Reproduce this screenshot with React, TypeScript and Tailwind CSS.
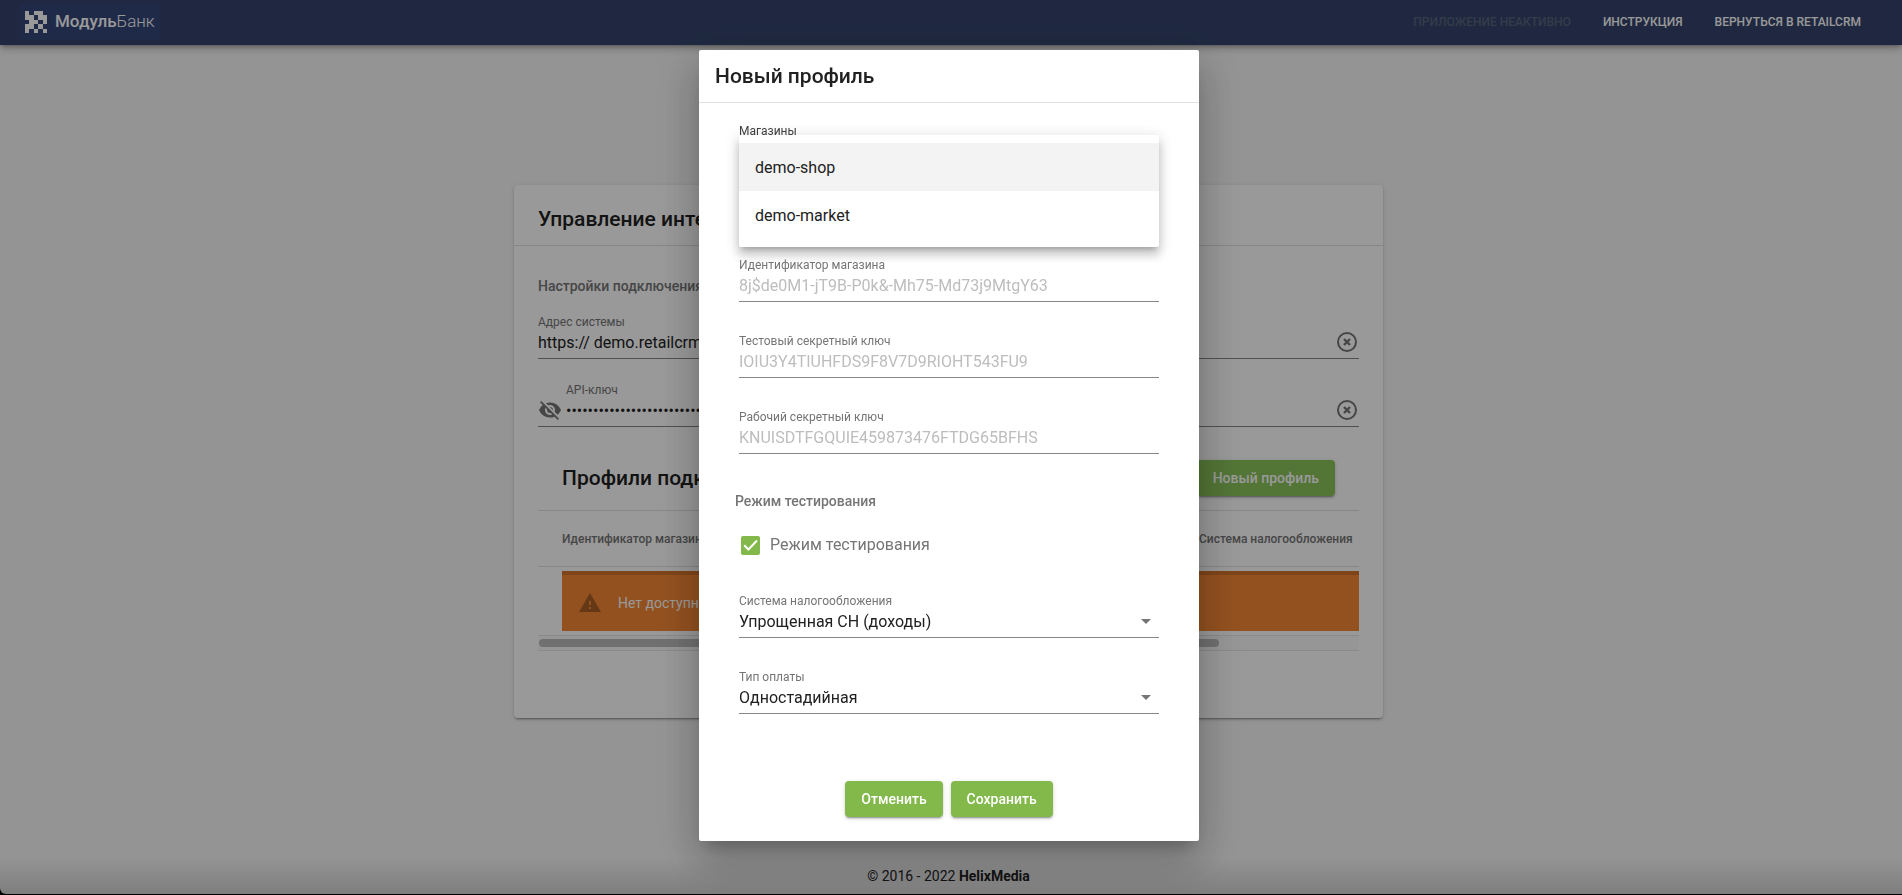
import { useState } from "react";
import type { ReactNode } from "react";
import { MdVisibilityOff } from "react-icons/md";

const SHOPS = ["demo-shop", "demo-market"];

const KEYS = [
  {
    id: "shop-id",
    label: "Идентификатор магазина",
    value: "8j$de0M1-jT9B-P0k&-Mh75-Md73j9MtgY63",
  },
  {
    id: "test-key",
    label: "Тестовый секретный ключ",
    value: "IOIU3Y4TIUHFDS9F8V7D9RIOHT543FU9",
  },
  {
    id: "prod-key",
    label: "Рабочий секретный ключ",
    value: "KNUISDTFGQUIE459873476FTDG65BFHS",
  },
];

// Filled cells of the 5x5 logo mark
const LOGO_ROWS = ["10110", "11011", "01101", "11010", "10101"];

function Logo() {
  return (
    <a href="#" className="flex h-9 w-[140px] items-center bg-[#35467a] pl-[5px] text-white">
      <svg viewBox="0 0 5 5" className="size-[22px]" shapeRendering="crispEdges" fill="currentColor">
        {LOGO_ROWS.map((row, y) =>
          row
            .split("")
            .map((cell, x) =>
              cell === "1" ? <rect key={`${x}-${y}`} x={x} y={y} width="1" height="1" /> : null
            )
        )}
      </svg>
      <span className="ml-2 text-[17px]">
        <span className="font-medium">Модуль</span>
        <span className="font-light">Банк</span>
      </span>
    </a>
  );
}

function ClearButton({ label }: { label: string }) {
  return (
    <button type="button" aria-label={label} className="flex size-6 items-center justify-center">
      <svg viewBox="0 0 24 24" className="size-6" fill="none" stroke="#757575" strokeWidth="2">
        <circle cx="12" cy="12" r="9" />
        <path d="M9 9l6 6M15 9l-6 6" strokeWidth="2.4" />
      </svg>
    </button>
  );
}

interface FieldProps {
  id: string;
  label: string;
  children: ReactNode;
}

function Field({ id, label, children }: FieldProps) {
  return (
    <div className="border-b border-[#868686]">
      <label htmlFor={id} className="block h-4 text-xs leading-4 text-[#757575]">
        {label}
      </label>
      {children}
    </div>
  );
}

interface SelectFieldProps {
  id: string;
  label: string;
  options: string[];
}

function SelectField({ id, label, options }: SelectFieldProps) {
  return (
    <Field id={id} label={label}>
      <div className="relative">
        <select
          id={id}
          className="block h-7 w-full appearance-none bg-transparent pb-0.5 text-base leading-6 text-[#212121] outline-none"
        >
          {options.map((option) => (
            <option key={option}>{option}</option>
          ))}
        </select>
        <svg
          viewBox="0 0 10 5"
          className="pointer-events-none absolute top-2.5 right-2 h-[5px] w-[10px]"
          fill="#757575"
        >
          <path d="M0 0h10L5 5z" />
        </svg>
      </div>
    </Field>
  );
}

function TopBar() {
  return (
    <header className="z-10 flex h-[45px] shrink-0 items-center justify-between bg-[#34446c] pr-[41px] pb-px pl-5 shadow-[0_2px_4px_-1px_rgba(0,0,0,0.3),0_4px_8px_rgba(0,0,0,0.2)]">
      <Logo />
      <nav className="flex gap-8 text-xs font-medium text-white uppercase">
        <span className="text-[#56647c]">Приложение неактивно</span>
        <a href="#">Инструкция</a>
        <a href="#">Вернуться в RetailCRM</a>
      </nav>
    </header>
  );
}

function SettingsCard() {
  return (
    <section className="w-full max-w-[869px] rounded-sm bg-white pb-[67px] shadow-[0_3px_1px_-2px_rgba(0,0,0,0.2),0_2px_2px_rgba(0,0,0,0.14),0_1px_5px_rgba(0,0,0,0.12)]">
      <h1 className="border-b border-black/12 px-6 pt-5 pb-3 text-[21px] leading-7 font-medium">
        Управление интеграцией
      </h1>
      <div className="px-6 pt-7">
        <h2 className="text-sm leading-6 font-medium text-[#757575]">Настройки подключения</h2>

        <div className="mt-4 flex items-end border-b border-[#868686]">
          <div className="flex-1">
            <label htmlFor="address" className="block h-4 text-xs leading-4 text-[#757575]">
              Адрес системы
            </label>
            <input
              id="address"
              type="text"
              defaultValue="https:// demo.retailcrm.ru"
              className="block h-7 w-full bg-transparent pb-1 text-base outline-none"
            />
          </div>
          <div className="pb-1">
            <ClearButton label="Очистить адрес" />
          </div>
        </div>

        <div className="mt-[23px] flex items-end border-b border-[#868686]">
          <MdVisibilityOff className="mr-1 mb-1 size-6 text-[#757575]" />
          <div className="flex-1">
            <label htmlFor="api-key" className="block h-4 text-xs leading-4 text-[#757575]">
              API-ключ
            </label>
            <input
              id="api-key"
              type="password"
              defaultValue="00000000000000000000000000000000"
              className="block h-7 w-full bg-transparent pb-1 text-base outline-none"
            />
          </div>
          <div className="pb-1">
            <ClearButton label="Очистить ключ" />
          </div>
        </div>

        <div className="mt-[33px] flex items-center justify-between px-6 pb-3.5">
          <h2 className="text-[21px] leading-7 font-medium">Профили подключения</h2>
          <button
            type="button"
            className="h-9 rounded-sm bg-[#8ac35a] px-4 text-sm font-medium text-white shadow-[0_3px_1px_-2px_rgba(0,0,0,0.2),0_2px_2px_rgba(0,0,0,0.14),0_1px_5px_rgba(0,0,0,0.12)]"
          >
            Новый профиль
          </button>
        </div>

        <table className="w-full border-y border-black/12 text-left text-xs text-[#757575]">
          <thead>
            <tr className="h-14">
              <th className="pl-6 font-medium">Идентификатор магазина</th>
              <th className="w-40 font-medium whitespace-nowrap">Система налогообложения</th>
            </tr>
          </thead>
        </table>

        <div
          role="alert"
          className="mt-1 ml-6 flex h-[60px] items-center border-t-4 border-[#d4732a] bg-[#f68835] pl-4 text-sm text-white"
        >
          <svg viewBox="0 0 24 24" className="mr-4 size-6" fill="#a95e25">
            <path d="M1 21h22L12 2 1 21zm12-3h-2v-2h2v2zm0-4h-2v-4h2v4z" />
          </svg>
          Нет доступных профилей
        </div>

        {/* Horizontal scrollbar of the profile list */}
        <div className="mt-1 border-y border-black/8 bg-[#fafafa] px-px py-[3px]">
          <div className="h-2 w-[83%] rounded-full bg-[#bbbbbb]" />
        </div>
      </div>
    </section>
  );
}

function ShopField() {
  const [shop, setShop] = useState(SHOPS[0]);

  return (
    <div className="relative border-b border-[#868686]">
      <label htmlFor="shops" className="block h-4 text-xs leading-4 text-[#424242]">
        Магазины
      </label>
      <button id="shops" type="button" aria-haspopup="listbox" className="block h-7 w-full" />
      <ul
        role="listbox"
        aria-label="Магазины"
        className="absolute inset-x-0 top-3 rounded-xs bg-white py-2 shadow-[0_5px_5px_-3px_rgba(0,0,0,0.2),0_8px_10px_1px_rgba(0,0,0,0.14),0_3px_14px_2px_rgba(0,0,0,0.12)]"
      >
        {SHOPS.map((name) => (
          <li key={name} role="option" aria-selected={name === shop}>
            <button
              type="button"
              onClick={() => setShop(name)}
              className={`h-12 w-full px-4 pt-0.5 text-left text-base ${
                name === shop ? "bg-[#f3f3f3]" : "bg-white"
              }`}
            >
              {name}
            </button>
          </li>
        ))}
      </ul>
    </div>
  );
}

function DialogButton({ type, children }: { type: "button" | "submit"; children: ReactNode }) {
  return (
    <button
      type={type}
      className="h-9 rounded-sm bg-[#82b94a] px-4 text-sm font-medium text-white shadow-[0_3px_1px_-2px_rgba(0,0,0,0.2),0_2px_2px_rgba(0,0,0,0.14),0_1px_5px_rgba(0,0,0,0.12)]"
    >
      {children}
    </button>
  );
}

function ProfileDialog() {
  const [testMode, setTestMode] = useState(true);

  return (
    <form
      role="dialog"
      aria-label="Новый профиль"
      onSubmit={(e) => e.preventDefault()}
      className="w-full max-w-[500px] rounded-xs bg-white pb-6 shadow-[0_11px_15px_-7px_rgba(0,0,0,0.2),0_24px_38px_3px_rgba(0,0,0,0.14),0_9px_46px_8px_rgba(0,0,0,0.12)]"
    >
      <h2 className="border-b border-black/12 px-4 py-3 text-[21px] leading-7 font-medium">
        Новый профиль
      </h2>

      <div className="px-10 pt-5">
        <ShopField />

        <div className="mt-[89px] flex flex-col gap-[31px]">
          {KEYS.map((key) => (
            <Field key={key.id} id={key.id} label={key.label}>
              <input
                id={key.id}
                type="text"
                disabled
                defaultValue={key.value}
                className="block h-7 w-full bg-transparent pb-1 text-base text-[#bdbdbd]"
              />
            </Field>
          ))}
        </div>

        <h3 className="mt-[35px] -ml-1 text-sm leading-6 font-medium text-[#757575]">
          Режим тестирования
        </h3>
        <label className="mt-5 flex h-6 items-center gap-2.5 pl-0.5 text-base text-[#757575]">
          <span className="relative flex size-[19px]">
            <input
              type="checkbox"
              checked={testMode}
              onChange={(e) => setTestMode(e.target.checked)}
              className="size-full appearance-none rounded-xs border-2 border-[#757575] checked:border-[#82b94a] checked:bg-[#82b94a]"
            />
            {testMode && (
              <svg
                viewBox="0 0 19 19"
                className="pointer-events-none absolute inset-0"
                fill="none"
                stroke="white"
                strokeWidth="2"
              >
                <path d="M3.2 9.2l4.2 4.3 8.6-9" />
              </svg>
            )}
          </span>
          Режим тестирования
        </label>

        <div className="mt-9 flex flex-col gap-[31px]">
          <SelectField
            id="tax"
            label="Система налогообложения"
            options={["Упрощенная СН (доходы)", "Общая СН"]}
          />
          <SelectField
            id="payment"
            label="Тип оплаты"
            options={["Одностадийная", "Двухстадийная"]}
          />
        </div>
      </div>

      <div className="mt-[67px] flex justify-center gap-2">
        <DialogButton type="button">Отменить</DialogButton>
        <DialogButton type="submit">Сохранить</DialogButton>
      </div>
    </form>
  );
}

export default function App() {
  return (
    <div className="min-h-screen bg-black pb-px font-['Roboto','Liberation_Sans',sans-serif] text-[#212121]">
      <div className="flex min-h-[calc(100vh-1px)] flex-col overflow-hidden rounded-bl-md bg-[#f7f7f7]">
        <TopBar />
        <main className="flex flex-1 items-center justify-center pr-[5px]">
          <SettingsCard />
        </main>
        <footer className="bg-linear-to-b from-transparent to-black/15 py-2 pr-[5px] text-center text-sm leading-5">
          © 2016 - 2022 <strong className="font-bold">HelixMedia</strong>
        </footer>
      </div>

      {/* Backdrop with the profile dialog */}
      <div className="fixed inset-0 z-20 flex items-start justify-center bg-black/40 pt-[50px] pr-1">
        <ProfileDialog />
      </div>
    </div>
  );
}
